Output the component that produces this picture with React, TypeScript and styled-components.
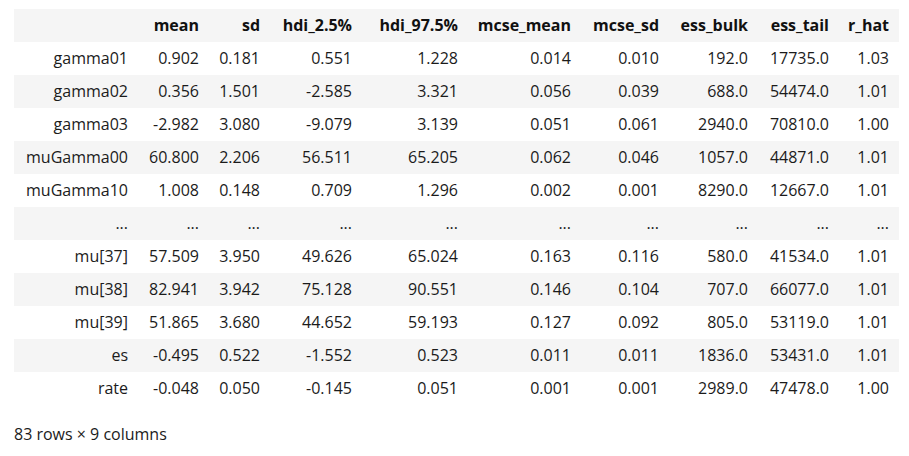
import React from 'react';
import styled, { createGlobalStyle } from 'styled-components';

const GlobalStyle = createGlobalStyle`
  html, body {
    margin: 0;
    padding: 0;
    background: #ffffff;
  }
`;

const Output = styled.div`
  padding: 9px 0 0 14px;
  font-family: "Open Sans", "Noto Sans", sans-serif;
  font-size: 16px;
  color: #1b1b1b;
`;

const Frame = styled.table`
  border-collapse: collapse;
  border-spacing: 0;
  table-layout: fixed;
  width: 885px;
`;

const Row = styled.tr<{ striped?: boolean }>`
  background: ${props => (props.striped ? '#f5f5f5' : '#ffffff')};
`;

const HeadCell = styled.th`
  font-weight: 700;
  text-align: right;
  padding: 6px 10px 6px 0;
  line-height: 21px;
  white-space: nowrap;
  color: #111;
`;

const IndexCell = styled.th`
  font-weight: 400;
  text-align: right;
  padding: 6px 10px 6px 0;
  line-height: 21px;
  white-space: nowrap;
`;

const Cell = styled.td`
  text-align: right;
  padding: 6px 10px 6px 0;
  line-height: 21px;
  white-space: nowrap;
`;

const Caption = styled.p`
  margin: 19px 0 0;
  line-height: 21px;
`;

const columns = ['mean', 'sd', 'hdi_2.5%', 'hdi_97.5%', 'mcse_mean', 'mcse_sd', 'ess_bulk', 'ess_tail', 'r_hat'];
const widths = [124, 71, 61, 92, 106, 113, 88, 89, 81, 60];

const rows: [string, string[]][] = [
  ['gamma01', ['0.902', '0.181', '0.551', '1.228', '0.014', '0.010', '192.0', '17735.0', '1.03']],
  ['gamma02', ['0.356', '1.501', '-2.585', '3.321', '0.056', '0.039', '688.0', '54474.0', '1.01']],
  ['gamma03', ['-2.982', '3.080', '-9.079', '3.139', '0.051', '0.061', '2940.0', '70810.0', '1.00']],
  ['muGamma00', ['60.800', '2.206', '56.511', '65.205', '0.062', '0.046', '1057.0', '44871.0', '1.01']],
  ['muGamma10', ['1.008', '0.148', '0.709', '1.296', '0.002', '0.001', '8290.0', '12667.0', '1.01']],
  ['...', ['...', '...', '...', '...', '...', '...', '...', '...', '...']],
  ['mu[37]', ['57.509', '3.950', '49.626', '65.024', '0.163', '0.116', '580.0', '41534.0', '1.01']],
  ['mu[38]', ['82.941', '3.942', '75.128', '90.551', '0.146', '0.104', '707.0', '66077.0', '1.01']],
  ['mu[39]', ['51.865', '3.680', '44.652', '59.193', '0.127', '0.092', '805.0', '53119.0', '1.01']],
  ['es', ['-0.495', '0.522', '-1.552', '0.523', '0.011', '0.011', '1836.0', '53431.0', '1.01']],
  ['rate', ['-0.048', '0.050', '-0.145', '0.051', '0.001', '0.001', '2989.0', '47478.0', '1.00']],
];

export default function App() {
  return (
    <Output>
      <GlobalStyle />
      <Frame>
        <colgroup>
          {widths.map((w, i) => (
            <col key={i} style={{ width: w }} />
          ))}
        </colgroup>
        <thead>
          <Row striped>
            <HeadCell />
            {columns.map(c => (
              <HeadCell key={c}>{c}</HeadCell>
            ))}
          </Row>
        </thead>
        <tbody>
          {rows.map(([name, values], index) => (
            <Row key={name + index} striped={index % 2 === 1}>
              <IndexCell>{name}</IndexCell>
              {values.map((v, j) => (
                <Cell key={j}>{v}</Cell>
              ))}
            </Row>
          ))}
        </tbody>
      </Frame>
      <Caption>83 rows × 9 columns</Caption>
    </Output>
  );
}
